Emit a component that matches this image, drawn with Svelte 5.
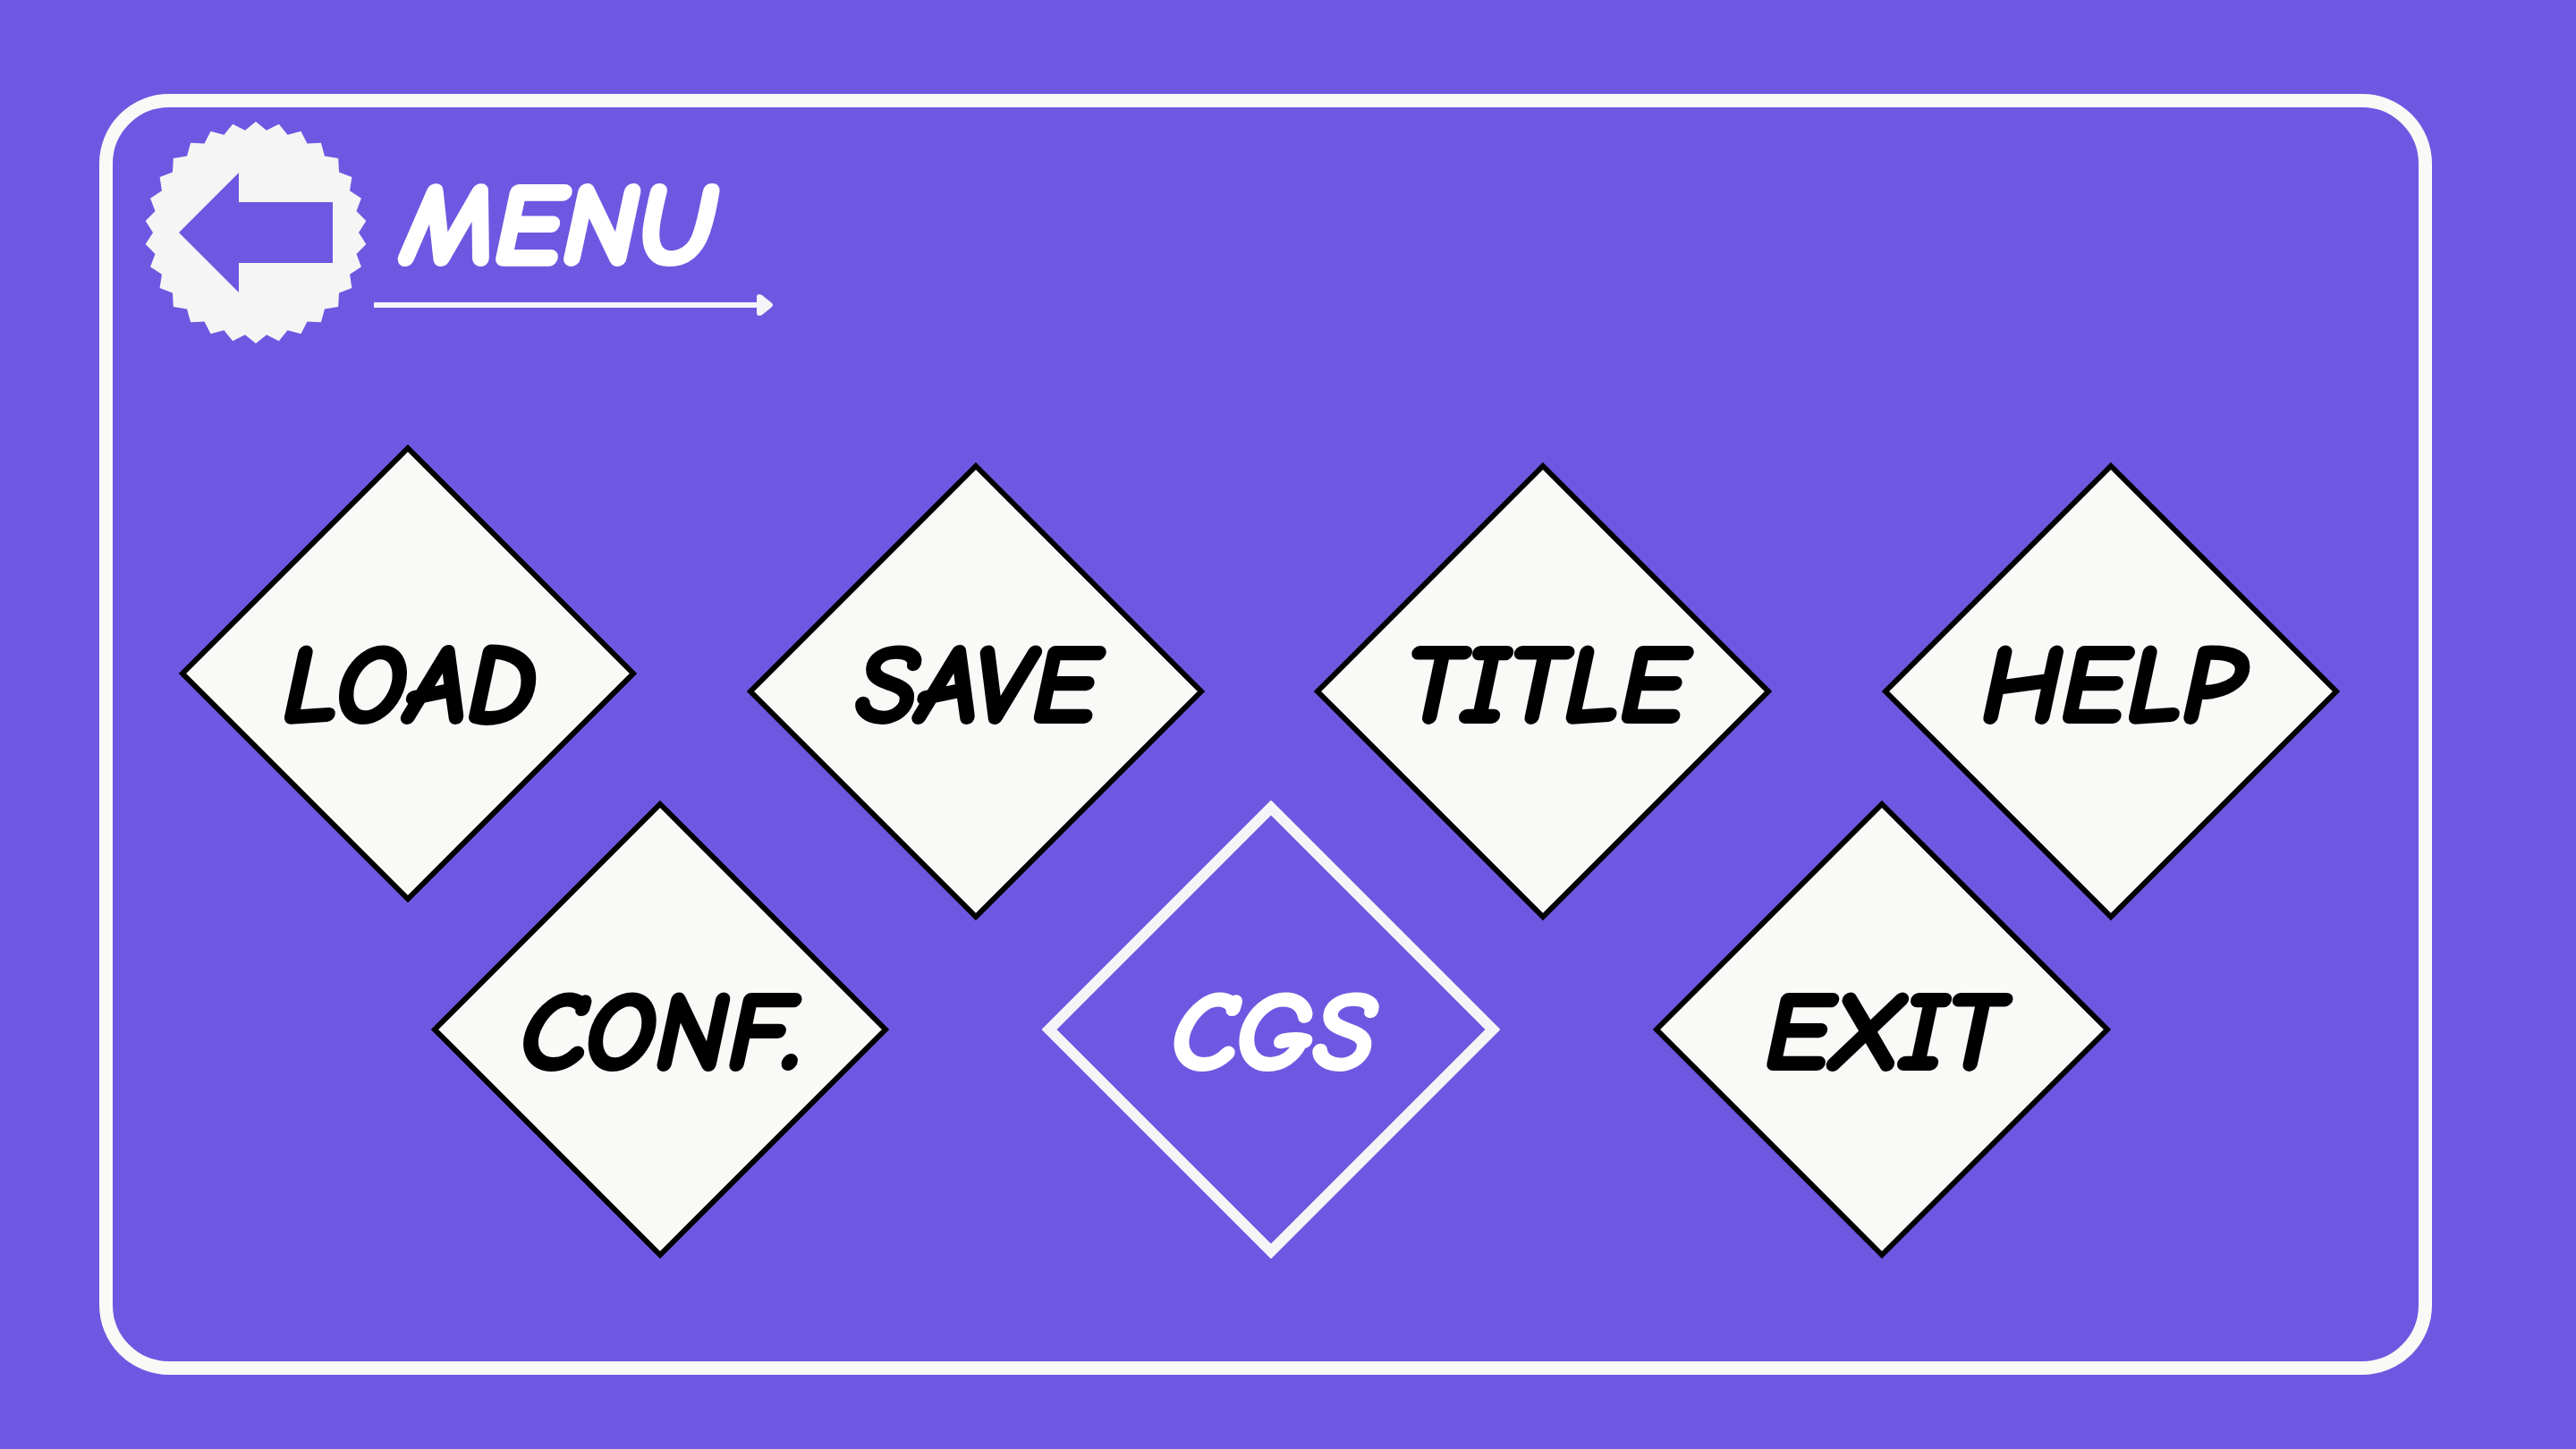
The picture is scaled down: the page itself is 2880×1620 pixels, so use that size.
<script>
  const rows = [
    {
      name: 'upper',
      items: [
        { label: 'LOAD', raised: true },
        { label: 'SAVE' },
        { label: 'TITLE' },
        { label: 'HELP' }
      ]
    },
    {
      name: 'lower',
      items: [{ label: 'CONF.' }, { label: 'CGS' }, { label: 'EXIT' }]
    }
  ];

  let selected = $state('CGS');

  // Thirty-toothed seal around the back arrow
  const TEETH = 30;
  const seal = Array.from({ length: TEETH * 2 }, (_, i) => {
    const r = i % 2 === 0 ? 124 : 115;
    const a = (Math.PI * i) / TEETH - Math.PI / 2;
    return `${(r * Math.cos(a)).toFixed(2)},${(r * Math.sin(a)).toFixed(2)}`;
  }).join(' ');
</script>

<div class="page">
  <main class="frame">
    <header class="header">
      <button class="back" type="button" aria-label="Back">
        <svg viewBox="-124 -124 248 248" aria-hidden="true">
          <polygon class="seal" points={seal} />
          <polygon class="arrow" points="-86,0 -19,-67 -19,-34 86,-34 86,34 -19,34 -19,67" />
        </svg>
      </button>
      <div class="heading">
        <h1>MENU</h1>
        <svg class="rule" viewBox="0 0 446 24" aria-hidden="true">
          <rect x="0" y="9" width="430" height="6" />
          <path d="M428 3 Q428 0 431 0 Q432 0 434 1 L444 9 Q448 12 444 15 L434 23 Q432 24 431 24 Q428 24 428 21 Z" />
        </svg>
      </div>
    </header>

    <nav aria-label="Menu">
      {#each rows as row (row.name)}
        <div class="row {row.name}">
          {#each row.items as item (item.label)}
            <button
              class="tile"
              class:raised={item.raised}
              class:selected={selected === item.label}
              type="button"
              aria-pressed={selected === item.label}
              onclick={() => (selected = item.label)}
            >
              <svg viewBox="0 0 512 512" aria-hidden="true">
                {#if selected === item.label}
                  <polygon points="256,8 504,256 256,504 8,256" />
                {:else}
                  <polygon points="256,4 508,256 256,508 4,256" />
                {/if}
              </svg>
              <span>{item.label}</span>
            </button>
          {/each}
        </div>
      {/each}
    </nav>
  </main>
</div>

<style>
  :global(body) {
    background: #6e58e1;
  }

  .page {
    box-sizing: border-box;
    display: flex;
    min-height: 100vh;
    padding: 105px 161px 83px 111px;
    background: #6e58e1;
    font-family: 'Comic Neue', Roboto, 'Open Sans', sans-serif;
    font-style: italic;
    font-weight: 700;
  }

  .frame {
    box-sizing: border-box;
    flex: 1;
    border: 15px solid #f9f9f7;
    border-radius: 78px;
    padding: 16px 88px 16px 74px;
  }

  .header {
    display: flex;
    gap: 8px;
    margin-left: -38px;
  }

  button {
    padding: 0;
    border: 0;
    background: none;
    color: inherit;
    font: inherit;
    cursor: pointer;
  }

  svg {
    display: block;
  }

  .back {
    width: 248px;
    height: 248px;
  }

  .seal {
    fill: #f5f5f5;
  }

  .arrow {
    fill: #6e58e1;
  }

  .heading {
    display: flex;
    flex-direction: column;
    gap: 12px;
    padding-top: 53px;
  }

  h1 {
    margin: 0;
    padding-left: 32px;
    color: #ffffff;
    font-size: 128px;
    line-height: 128px;
    -webkit-text-stroke: 6px currentColor;
  }

  .rule {
    width: 446px;
    height: 24px;
    fill: #f5f4f8;
  }

  nav {
    padding-top: 133px;
  }

  .row {
    display: flex;
    justify-content: space-between;
  }

  .lower {
    margin-top: -134px;
    padding: 0 256px 0 282px;
  }

  .tile {
    display: grid;
    place-items: center;
    width: 512px;
    height: 512px;
    color: #000000;
    font-size: 124px;
    line-height: 128px;
    -webkit-text-stroke: 4px currentColor;
  }

  .tile > * {
    grid-area: 1 / 1;
  }

  .tile svg {
    width: 512px;
    height: 512px;
    fill: #f9f9f7;
    stroke: #000000;
    stroke-width: 6;
  }

  /* The diamond lifts while its label stays on the row's baseline */
  .raised svg {
    transform: translateY(-20px);
  }

  .tile span {
    z-index: 1;
  }

  .upper span {
    padding: 0 4px 12px 8px;
  }

  .lower span {
    padding: 8px 4px 0 8px;
  }

  .tile.selected {
    color: #ffffff;
  }

  .tile.selected svg {
    fill: none;
    stroke: #f5f5f7;
    stroke-width: 12;
  }
</style>
